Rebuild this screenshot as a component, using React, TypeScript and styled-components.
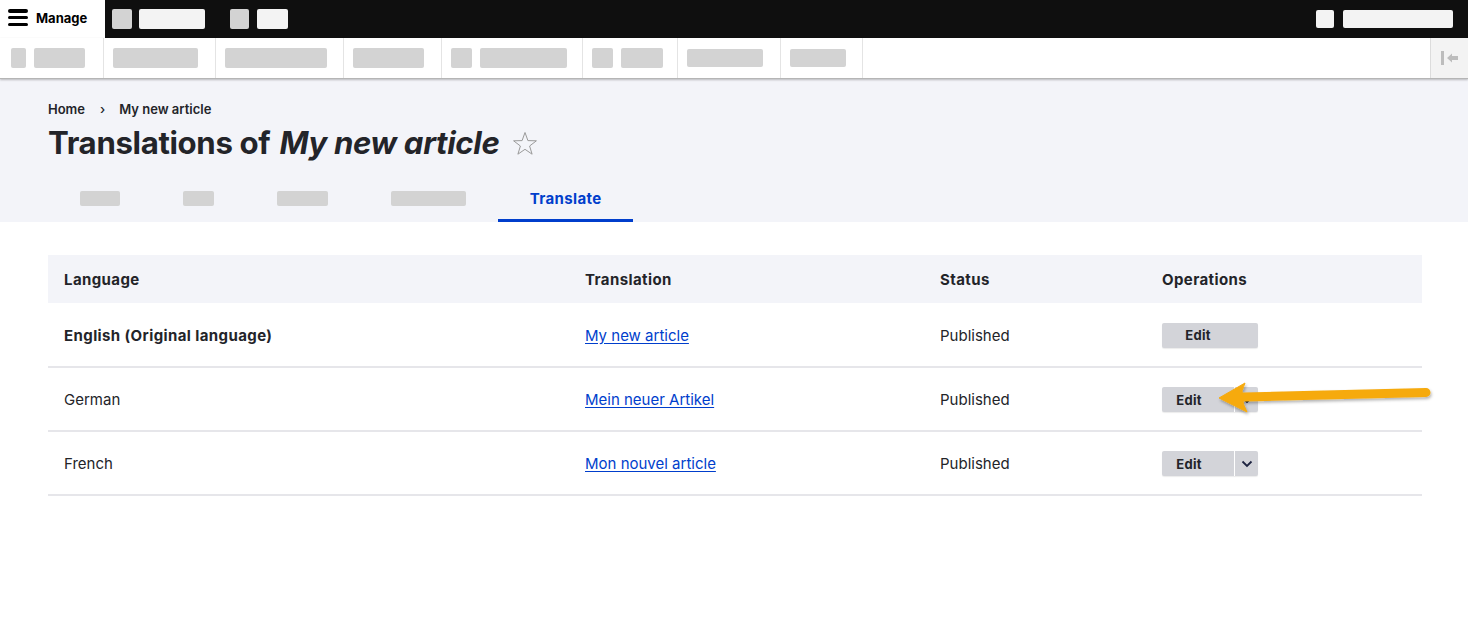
import * as React from 'react';
import styled, { createGlobalStyle } from 'styled-components';

const GlobalStyle = createGlobalStyle`
  html, body { margin: 0; padding: 0; background: #fff; }
  body { font-family: Inter, "Noto Sans", "Liberation Sans", sans-serif; color: #232429; }
  * { box-sizing: border-box; }
`;

const Page = styled.div`
  position: relative;
  width: 1468px;
  min-height: 632px;
  background: #fff;
`;

/* ---------- toolbar ---------- */

const TopBar = styled.div`
  display: flex;
  align-items: center;
  height: 38px;
  background: #0f0f0f;
`;

const ManageTab = styled.div`
  display: flex;
  align-items: center;
  gap: 8px;
  width: 105px;
  height: 100%;
  padding: 0 0 3px 8px;
  background: #fff;
  font-size: 13px;
  font-weight: 700;
  color: #000;
`;

const Burger = styled.span`
  display: flex;
  flex-direction: column;
  justify-content: space-between;
  width: 20px;
  height: 17px;
  span {
    display: block;
    height: 3.5px;
    border-radius: 2px;
    background: #000;
  }
`;

const Group = styled.div<{ $ml?: number; $gap?: number }>`
  display: flex;
  align-items: center;
  gap: ${(p) => p.$gap ?? 7}px;
  margin-left: ${(p) => p.$ml ?? 0}px;
`;

const Block = styled.span<{ $w: number; $h?: number; $light?: boolean }>`
  display: block;
  width: ${(p) => p.$w}px;
  height: ${(p) => p.$h ?? 20}px;
  border-radius: 2px;
  background: ${(p) => (p.$light ? '#f3f3f3' : '#d3d3d3')};
`;

const TrayBar = styled.div`
  display: flex;
  height: 41px;
  background: #fff;
  border-bottom: 1px solid #b5b5b5;
  box-shadow: 0 1px 2px rgba(0, 0, 0, 0.25);
  position: relative;
  z-index: 1;
`;

const TrayItem = styled.div<{ $w: number; $pl?: number }>`
  display: flex;
  align-items: center;
  gap: 8px;
  width: ${(p) => p.$w}px;
  padding-left: ${(p) => p.$pl ?? 9}px;
  border-right: 1px solid #e4e4e4;
`;

const TrayToggle = styled.div`
  margin-left: auto;
  width: 38px;
  display: flex;
  align-items: center;
  justify-content: center;
  background: #f3f3f3;
  border-left: 1px solid #dcdcdc;
`;

/* ---------- page header ---------- */

const Header = styled.div`
  background: #f3f4f9;
  padding: 20px 48px 0;
`;

const Breadcrumb = styled.nav`
  display: flex;
  align-items: center;
  height: 20px;
  font-size: 13px;
  font-weight: 600;
  color: #232429;
  span.sep {
    margin: 0 14px 0 15px;
    font-weight: 500;
  }
`;

const Title = styled.h1`
  display: flex;
  align-items: center;
  margin: 4px 0 0;
  height: 40px;
  font-size: 31.2px;
  font-weight: 700;
  letter-spacing: -0.35px;
  color: #232429;
  em { font-style: italic; margin-left: 9px; }
  svg { margin-left: 13px; }
`;

const Tabs = styled.div`
  display: flex;
  margin-top: 11px;
  height: 48px;
`;

const Tab = styled.div<{ $active?: boolean }>`
  display: flex;
  align-items: center;
  padding: 3px ${(p) => (p.$active ? 32 : 31.6)}px 0;
  font-size: 15px;
  font-weight: 700;
  letter-spacing: 0.35px;
  color: #003ecc;
  border-bottom: 3px solid ${(p) => (p.$active ? '#003ecc' : 'transparent')};
`;

/* ---------- table ---------- */

const Main = styled.main`
  padding: 33px 46px 0 48px;
`;

const Table = styled.table`
  width: 1374px;
  border-collapse: collapse;
  font-size: 15px;
  color: #232429;
`;

const Th = styled.th<{ $w: number }>`
  width: ${(p) => p.$w}px;
  height: 48px;
  padding: 0 16px;
  text-align: left;
  font-weight: 700;
  letter-spacing: 0.4px;
  background: #f3f4f9;
`;

const Td = styled.td<{ $strong?: boolean }>`
  height: 64px;
  padding: 1px 16px 0;
  font-weight: ${(p) => (p.$strong ? 700 : 400)};
  letter-spacing: ${(p) => (p.$strong ? '0.4px' : '0')};
  border-bottom: 2px solid #e6e6ea;
`;

const Link = styled.a`
  color: #003ecc;
  text-decoration: underline;
  text-underline-offset: 2px;
`;

const Button = styled.span`
  display: inline-flex;
  align-items: center;
  justify-content: center;
  width: 96px;
  height: 25px;
  padding-right: 24px;
  border-radius: 2px;
  background: #d3d4d9;
  font-size: 13px;
  font-weight: 700;
  letter-spacing: 0.3px;
  color: #232429;
  box-shadow: 0 1px 1px rgba(0, 0, 0, 0.08);
`;

const SplitButton = styled.span`
  display: inline-flex;
  width: 96px;
  height: 25px;
  border-radius: 2px;
  background: #d3d4d9;
  font-size: 13px;
  font-weight: 700;
  letter-spacing: 0.3px;
  box-shadow: 0 1px 1px rgba(0, 0, 0, 0.08);
  span.main {
    flex: 1;
    display: flex;
    align-items: center;
    justify-content: center;
    padding-right: 18px;
    border-right: 1px solid #fff;
  }
  span.drop {
    width: 23px;
    display: flex;
    align-items: center;
    justify-content: center;
  }
`;

const Arrow = styled.svg`
  position: absolute;
  left: 1210px;
  top: 375px;
  overflow: visible;
`;

const rows = [
  { lang: 'English (Original language)', strong: true, title: 'My new article', split: false },
  { lang: 'German', strong: false, title: 'Mein neuer Artikel', split: true },
  { lang: 'French', strong: false, title: 'Mon nouvel article', split: true },
];

export default function App() {
  return (
    <Page>
      <GlobalStyle />
      <TopBar>
        <ManageTab>
          <Burger><span /><span /><span /></Burger>
          Manage
        </ManageTab>
        <Group $ml={7}>
          <Block $w={20} />
          <Block $w={66} $light />
        </Group>
        <Group $ml={25} $gap={8}>
          <Block $w={19} />
          <Block $w={31} $light />
        </Group>
        <Group $ml={1028} $gap={9}>
          <Block $w={18} $h={18} $light />
          <Block $w={110} $h={18} $light />
        </Group>
      </TopBar>

      <TrayBar>
        <TrayItem $w={104} $pl={11}>
          <Block $w={15} />
          <Block $w={51} />
        </TrayItem>
        <TrayItem $w={112}><Block $w={85} /></TrayItem>
        <TrayItem $w={128}><Block $w={102} /></TrayItem>
        <TrayItem $w={98}><Block $w={71} /></TrayItem>
        <TrayItem $w={141}>
          <Block $w={21} />
          <Block $w={87} />
        </TrayItem>
        <TrayItem $w={95}>
          <Block $w={21} />
          <Block $w={42} />
        </TrayItem>
        <TrayItem $w={103}><Block $w={76} $h={18} /></TrayItem>
        <TrayItem $w={82}><Block $w={56} $h={18} /></TrayItem>
        <TrayToggle>
          <svg width="20" height="16" viewBox="0 0 20 16">
            <rect x="1" y="1" width="3" height="14" fill="#bdbdbd" />
            <path d="M7 8 L12 3.5 V6 H18 V10 H12 V12.5 Z" fill="#bdbdbd" />
          </svg>
        </TrayToggle>
      </TrayBar>

      <Header>
        <Breadcrumb>
          <span>Home</span>
          <span className="sep">›</span>
          <span>My new article</span>
        </Breadcrumb>
        <Title>
          Translations of <em>My new article</em>
          <svg width="26" height="25" viewBox="0 0 26 25">
            <path
              d="M13 1.5 L15.9 9.6 L24.4 9.8 L17.6 15 L20.1 23.2 L13 18.3 L5.9 23.2 L8.4 15 L1.6 9.8 L10.1 9.6 Z"
              fill="none"
              stroke="#9a9a9a"
              strokeWidth="1"
            />
          </svg>
        </Title>
        <Tabs>
          <Tab><Block $w={40} $h={15} /></Tab>
          <Tab><Block $w={31} $h={15} /></Tab>
          <Tab><Block $w={51} $h={15} /></Tab>
          <Tab><Block $w={75} $h={15} /></Tab>
          <Tab $active>Translate</Tab>
        </Tabs>
      </Header>

      <Main>
        <Table>
          <thead>
            <tr>
              <Th $w={521}>Language</Th>
              <Th $w={355}>Translation</Th>
              <Th $w={222}>Status</Th>
              <Th $w={276}>Operations</Th>
            </tr>
          </thead>
          <tbody>
            {rows.map((r) => (
              <tr key={r.lang}>
                <Td $strong={r.strong}>{r.lang}</Td>
                <Td><Link>{r.title}</Link></Td>
                <Td>Published</Td>
                <Td>
                  {r.split ? (
                    <SplitButton>
                      <span className="main">Edit</span>
                      <span className="drop">
                        <svg width="12" height="8" viewBox="0 0 12 8">
                          <path d="M1.5 1.5 L6 6 L10.5 1.5" fill="none" stroke="#1d2340" strokeWidth="1.8" />
                        </svg>
                      </span>
                    </SplitButton>
                  ) : (
                    <Button>Edit</Button>
                  )}
                </Td>
              </tr>
            ))}
          </tbody>
        </Table>
      </Main>

      <Arrow width="230" height="45" viewBox="0 0 230 45">
        <defs>
          <filter id="sh" x="-10%" y="-30%" width="120%" height="160%">
            <feDropShadow dx="1" dy="2" stdDeviation="1.5" floodColor="#000" floodOpacity="0.3" />
          </filter>
        </defs>
        <g filter="url(#sh)" fill="#f6aa0e" stroke="#f6aa0e">
          <line x1="33" y1="22" x2="216" y2="17.5" strokeWidth="9" strokeLinecap="round" />
          <path d="M9 23 L35 8 Q31 16 32 22 Q33 30 37 37 Z" strokeWidth="1" strokeLinejoin="round" />
        </g>
      </Arrow>
    </Page>
  );
}
